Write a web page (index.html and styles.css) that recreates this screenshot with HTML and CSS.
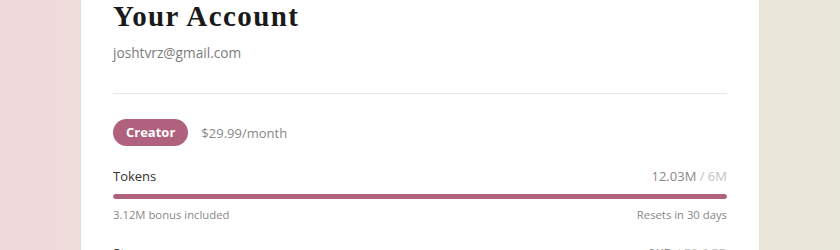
FILE: index.html
```html
<!DOCTYPE html>
<html>
<head>
<meta charset="utf-8">
<link rel="stylesheet" href="styles.css">
</head>
<body>
<div class="page">
  <div class="card">
    <h1 class="title">Your Account</h1>
    <div class="email">joshtvrz@gmail.com</div>
    <hr class="divider">
    <div class="plan">
      <span class="badge">Creator</span>
      <span class="price">$29.99/month</span>
    </div>
    <div class="usage">
      <div class="usage-head">
        <span class="label">Tokens</span>
        <span class="value">12.03M <span class="max">/ 6M</span></span>
      </div>
      <div class="bar"><div class="fill" style="width:100%"></div></div>
      <div class="usage-foot">
        <span>3.12M bonus included</span>
        <span>Resets in 30 days</span>
      </div>
    </div>
    <div class="usage">
      <div class="usage-head">
        <span class="label">Storage</span>
        <span class="value">0KB <span class="max">/ 50.0GB</span></span>
      </div>
    </div>
  </div>
</div>
</body>
</html>
```
FILE: styles.css
```css
html, body {
  margin: 0;
  height: 100%;
  overflow: hidden;
}
body {
  background: linear-gradient(90deg, #eedada 0%, #efdfdc 30%, #ede5da 70%, #e9e7d9 100%);
  font-family: "Open Sans", "Noto Sans", sans-serif;
}
.page {
  display: flex;
  justify-content: center;
}
.card {
  width: 614px;
  background: #ffffff;
  padding: 0 32px 32px;
  min-height: 400px;
  box-shadow: 0 0 4px rgba(0,0,0,0.03);
}
.title {
  font-family: "Liberation Serif", "Times New Roman", serif;
  font-weight: 700;
  font-size: 29px;
  letter-spacing: 1.4px;
  line-height: 32px;
  margin: 0;
  color: #1a1a1a;
}
.email {
  margin-top: 12px;
  font-size: 13.7px;
  line-height: 18px;
  color: #7c7c7c;
}
.divider {
  border: 0;
  border-top: 1px solid #e8e8e8;
  margin: 31px 0 0;
}
.plan {
  display: flex;
  align-items: center;
  gap: 13px;
  margin-top: 25px;
}
.badge {
  background: #b0617d;
  color: #fff;
  font-weight: 700;
  font-size: 13px;
  line-height: 27px;
  height: 27px;
  padding: 0 13px;
  border-radius: 14px;
}
.price {
  font-size: 13px;
  color: #888;
}
.usage {
  margin-top: 21px;
}
.usage-head {
  display: flex;
  justify-content: space-between;
  font-size: 13px;
  line-height: 18px;
}
.label {
  color: #333;
  font-weight: 500;
}
.value {
  color: #888;
}
.max {
  color: #c4c4c4;
}
.bar {
  margin-top: 9px;
  height: 5px;
  border-radius: 3px;
  background: #eee;
  overflow: hidden;
}
.fill {
  height: 100%;
  background: #b0617d;
  border-radius: 3px;
}
.usage-foot {
  display: flex;
  justify-content: space-between;
  margin-top: 8px;
  font-size: 11.3px;
  line-height: 16px;
  color: #888;
}
```
